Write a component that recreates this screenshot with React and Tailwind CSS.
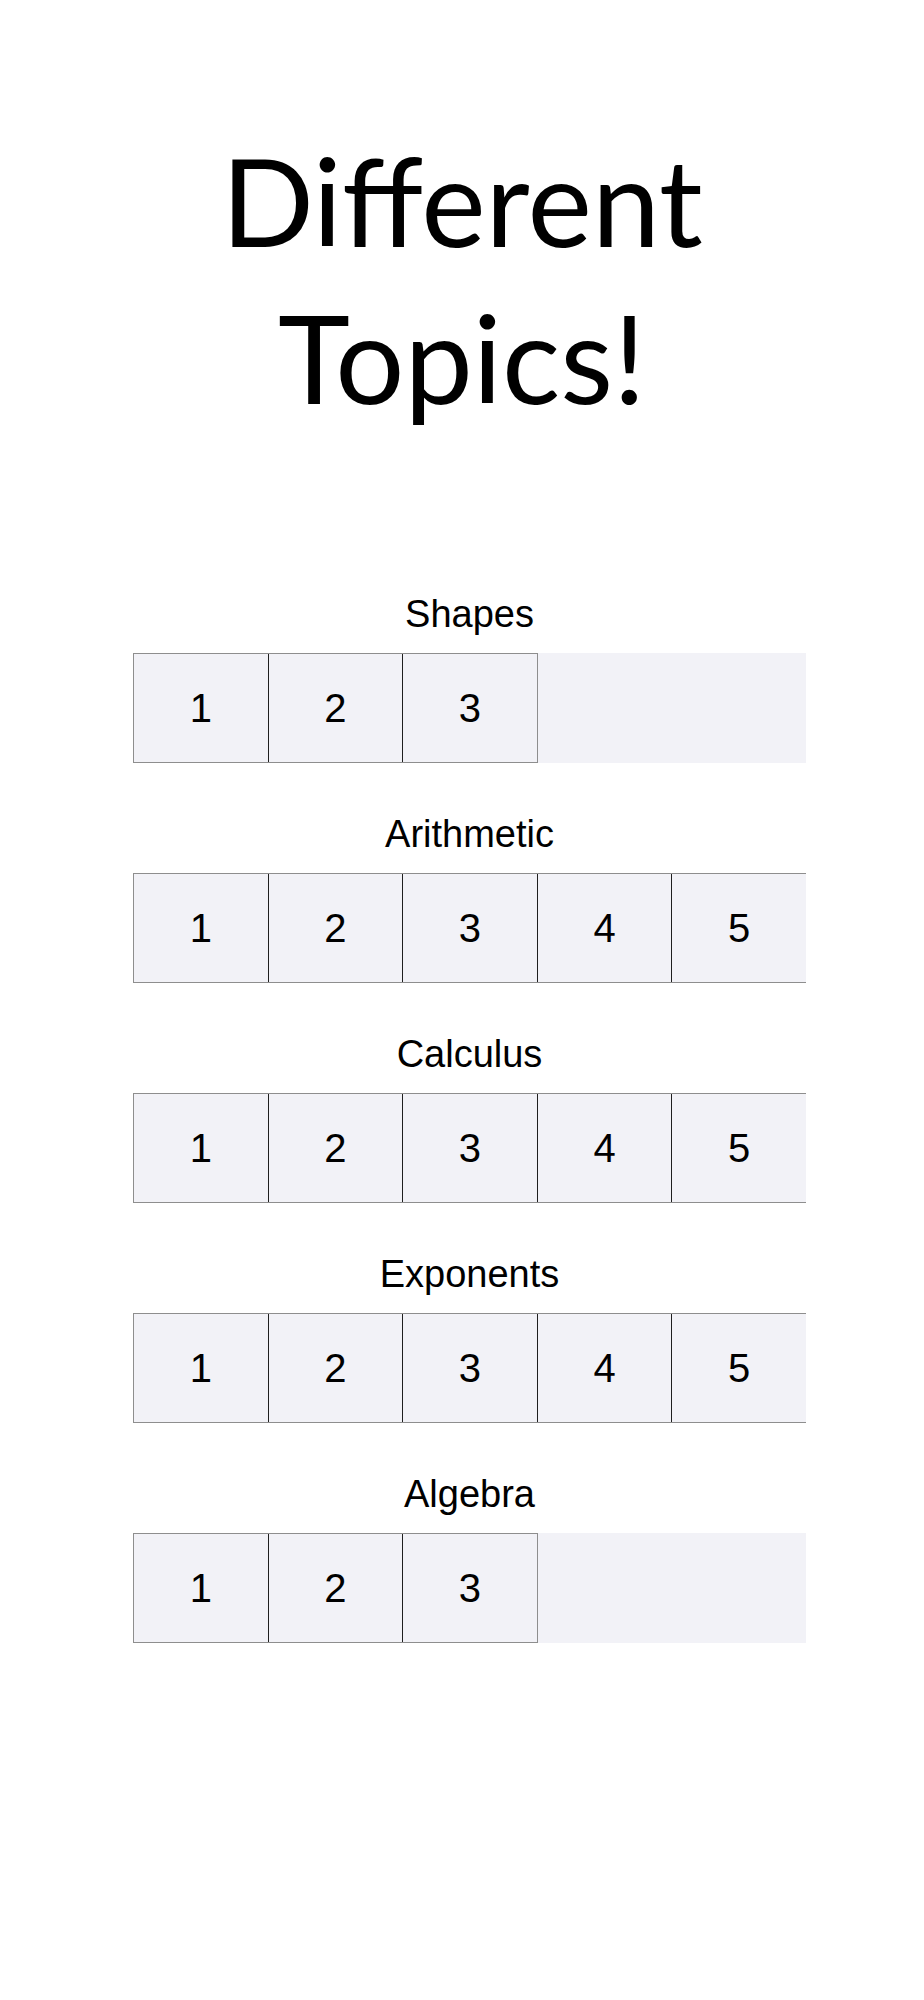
const topics = [
  { name: "Shapes", levels: 3 },
  { name: "Arithmetic", levels: 5 },
  { name: "Calculus", levels: 5 },
  { name: "Exponents", levels: 5 },
  { name: "Algebra", levels: 3 },
];

const sans = { fontFamily: '"Liberation Sans", Arial, sans-serif' };

function LevelRow({ levels }) {
  const cells = Array.from({ length: levels }, (_, i) => i + 1);
  const full = levels === 5;
  return (
    <div className="flex h-[110px] w-[673px] overflow-hidden bg-[#f2f2f7]">
      <div className={"flex h-full border-y border-[#8e8e8e] " + (full ? "" : "border-r")}>
        {cells.map((n) => (
          <div
            key={n}
            className={
              "flex h-full w-[134.6px] shrink-0 items-center justify-center text-[40px] leading-none text-black " +
              (n === 1 ? "border-l border-[#8e8e8e]" : "border-l-[1.5px] border-[#1f1f1f]")
            }
            style={sans}
          >
            {n}
          </div>
        ))}
      </div>
    </div>
  );
}

export default function App() {
  return (
    <div className="min-h-[2000px] w-full bg-white pt-[122px]">
      <h1
        className="text-center text-[122px] font-normal leading-[157px] text-black"
        style={{ fontFamily: "Lato, 'Open Sans', sans-serif" }}
      >
        Different
        <br />
        Topics!
      </h1>

      <div className="mt-[156px] flex flex-col gap-[49px] pl-[133px]">
        {topics.map((t) => (
          <section key={t.name} className="flex w-[673px] flex-col">
            <h2
              className="mb-[17px] text-center text-[38px] font-normal leading-[44px] text-black"
              style={sans}
            >
              {t.name}
            </h2>
            <LevelRow levels={t.levels} />
          </section>
        ))}
      </div>
    </div>
  );
}
